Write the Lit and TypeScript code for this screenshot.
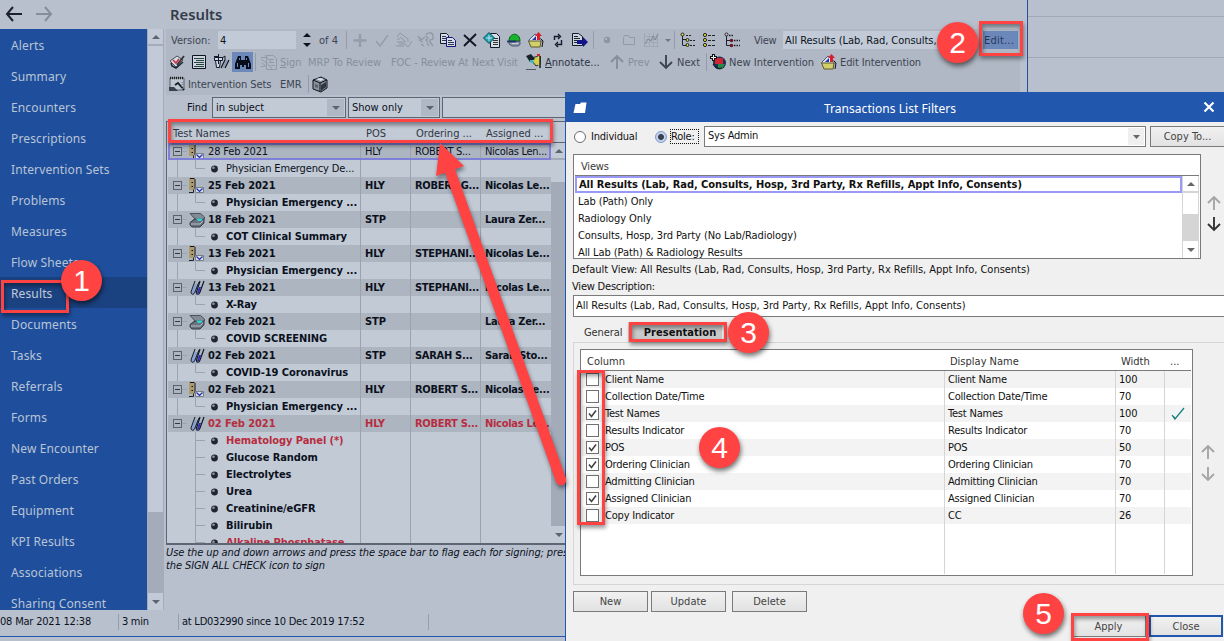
import {LitElement, css, html, svg} from 'lit';
import {customElement, property} from 'lit/decorators.js';
import {classMap} from 'lit/directives/class-map.js';

const ICONS: Record<string, unknown> = {
  plus: svg`<path d="M8 2v13M1.500 8.500h13" stroke="#959daa" stroke-width="2.500" fill="none"/>`,
  check: svg`<path d="M2 9l4 5L14 3" stroke="#959daa" stroke-width="1.500" fill="none"/>`,
  hand: svg`<path d="M1 5l3-4 8 6M4 5l5 4M1 7h3M1 10h9M3 12h6M0 14h8M9 12l3 3 4-6M12 7v3" stroke="#8f97a4" fill="none"/>`,
  hands: svg`<path d="M0 4l3 4 4-3M1 8l4 2M8 3c1-3 7-3 7 1v3l-3 1v3M8 4l2 2-2 2 2 2M9 11l2 3M3 12l3 2M12 10l3 4" stroke="#8f97a4" stroke-width="1.300" fill="none"/>`,
  copy: svg`<path d="M.5 1.500h6l2 2v8h-8z" fill="#d6dce6" stroke="#111b2c"/><path d="M6.500 5.500h6l3 3v6h-9z" fill="#d6dce6" stroke="#14147c"/><path d="M2 4.500h4M2 6.500h4M2 8.500h4M8 8.500h4M8 10.500h6M8 12.500h6" stroke="#2a3550"/>`,
  cross: svg`<path d="M2 3l12 11M14 2L2 14" stroke="#111722" stroke-width="1.900" fill="none"/>`,
  target: svg`<path d="M6.500 1.500h6l3 3v11h-9z" fill="#d6dce6" stroke="#111b2c"/><path d="M9 6.500h5M9 8.500h5M9 10.500h5M9 12.500h5" stroke="#333"/><path d="M5 .500l5.500 5.500L5 11.500-.500 6z" fill="#18a7b5" stroke="#0b4c55"/><path d="M5 3v6M2 6h6" stroke="#d6dce6"/>`,
  green: svg`<path d="M3 9c0-9 11-9 11 0z" fill="#18b32c" stroke="#0b5c1c"/><path d="M3 9.500h11v3l-2 1.500H6l-3-2z" fill="#8c97aa" stroke="#4c566c"/><path d="M1 9.500h9" stroke="#23306e" stroke-width="1.800"/><path d="M6 11.500h6" stroke="#c9d0dc"/>`,
  folder: svg`<path d="M1 8l6-6 6 5v3H1z" fill="#dce3ef" stroke="#4a5a8a"/><path d="M4 8l4-4v4z" fill="#2433a8"/><path d="M.500 9h12.500l-1 6H3z" fill="#d3cf6a" stroke="#5c5a2c"/><path d="M9 8V4H7l3.500-4L14 4h-2v4z" fill="#d81f2c"/><path d="M13 7l2 2-1 6" stroke="#111" fill="none"/>`,
  refresh: svg`<path d="M4.500 8V4.500H9M8 2l2.500 2.500L8 7M11.500 8v4.500H7M8 10l-2.500 2.500L8 15" stroke="#111a2a" stroke-width="1.400" fill="none"/>`,
  docArrow: svg`<path d="M.5 1.500h6l4 3v9h-10z" fill="#cdd4df" stroke="#111b2c"/><path d="M2 4.500h4M2 6.500h6M2 8.500h3M2 10.500h3" stroke="#222"/><path d="M5 8h6V5l5 5-5 5v-3H5z" fill="#15158a"/>`,
  dot: svg`<circle cx="8" cy="8" r="3.200" fill="#8c95a3"/><circle cx="7" cy="7" r="1" fill="#b7bfcb"/>`,
  greyFolder: svg`<path d="M2.500 12.500v-7l1-2h4l1 2h5v7z" stroke="#929aa7" fill="none"/>`,
  chart: svg`<path d="M1.500 1v13.500H16M3 4.500h12M3 7.500h12M3 10.500h12M6.500 1v13M10.500 1v13M14.500 1v13" stroke="#a0a8b5" fill="none"/><path d="M2 12l3-5 3 2 2-5 2 4 3-6" stroke="#7e8796" fill="none"/>`,
  tree: svg`<path d="M2.500 3v10.500M3 7.500h3M3 13.500h3" stroke="#1b2230" fill="none"/><path d="M6 3.500h5M10 8.500h6M10 13.500h6" stroke="#1b2230" stroke-dasharray="2 1"/><circle cx="2.500" cy="2.500" r="1.500" fill="#d9d63a" stroke="#222"/><circle cx="7.500" cy="8" r="1.500" fill="#d9d63a" stroke="#222"/><circle cx="7.500" cy="13" r="1.500" fill="#d9d63a" stroke="#222"/>`,
  tree2: svg`<path d="M6 3.500h7M6 8.500h7M6 13.500h7" stroke="#1b2230" stroke-dasharray="3 1"/><circle cx="3" cy="3" r="1.600" fill="#d9d63a" stroke="#222"/><circle cx="3" cy="8" r="1.600" fill="#d9d63a" stroke="#222"/><circle cx="3" cy="13" r="1.600" fill="#d9d63a" stroke="#222"/>`,
  tree3: svg`<path d="M2.500 4v9.500M2.500 8.500h4M2.500 13.500h4" stroke="#1b2230" fill="none"/><path d="M10 8.500h6M10 13.500h6M5 3.500h5" stroke="#1b2230" stroke-width="1.600" stroke-dasharray="1.500 1"/><circle cx="2.500" cy="2.500" r="1.500" fill="#ccd" stroke="#222"/><circle cx="7.500" cy="8.500" r="1.800" fill="#6b1820"/><circle cx="7.500" cy="13.500" r="1.800" fill="#6b1820"/>`,
  signBook: svg`<path d="M1 7l7-5 6 4-7 7z" fill="#d3d9e3" stroke="#4a525e"/><path d="M2 9l1 3 4 2 7-6" fill="none" stroke="#1c2431" stroke-width="1.500"/><path d="M4 6l3 3 3-4" stroke="#d02c3a" stroke-width="1.600" fill="none"/><path d="M8 11l7-9" stroke="#333" stroke-width="1.800"/>`,
  lines: svg`<path d="M1.500 1.500h13v13h-13z" fill="#cdd4df" stroke="#0d1420"/><path d="M3 4.500h10M5 6.500h8M3 8.500h10M5 10.500h8M3 12.500h10" stroke="#23453b"/>`,
  caps: svg`<path d="M1.500 3.500h8v3h-8zM2.500 6.500l1 7h3l1-7" fill="#d3d9e3" stroke="#111a2a"/><path d="M5.500 0v10M1 2.500h5" stroke="#111a2a"/><path d="M8 14l4-8M12 14l4-8" stroke="#111a2a" stroke-width="1.300"/><path d="M10 14l4-8" stroke="#8b98ab" stroke-width="1.500"/><path d="M9 4l3-2v4" stroke="#111a2a" fill="none"/>`,
  binoculars: svg`<path d="M3 2h3v4h4V2h3l3 8v5h-5v-4H9v2H7v-2H5v4H0v-5z" fill="#080d1a"/><path d="M2.500 9v4M4.500 4v2M11.500 4v2M13.500 9v4" stroke="#6a86bd"/>`,
  signDoc: svg`<path d="M5.500 1.500h7l3 3v11h-10zM0 5l8 6 3 4M1 9l5 4M4 1l7 8M8 5.500h5M8 8.500h5M10 11.500h4M0 3.500h5M0 12.500h4" stroke="#929ba8" fill="none"/>`,
  annotate: svg`<path d="M4 4l6 8 4-2V2z" fill="#d4cf54" stroke="#222a38"/><path d="M0 2l5-2 4 5-5 3z" fill="#16222e"/><path d="M4 6h3l1 4-4-2z" fill="#32b8c4"/><path d="M14 2v12" stroke="#161a20" stroke-width="1.500"/><path d="M12.500 0v11" stroke="#ddd03c" stroke-width="1.500"/><path d="M11 1h3" stroke="#c82a30" stroke-width="2"/><path d="M0 15.500h10" stroke="#556"/>`,
  up: svg`<path d="M8 15V2M2 8l6-6 6 6" stroke="currentColor" stroke-width="1.900" fill="none"/>`,
  down: svg`<path d="M8 1v13M2 8l6 6 6-6" stroke="currentColor" stroke-width="1.900" fill="none"/>`,
  newInt: svg`<circle cx="9.500" cy="9" r="6.500" fill="#1c3152"/><path d="M5 4h8v6H5z" fill="#cf2431"/><path d="M8 10h7l-3 5H8z" fill="#238a4b"/><path d="M3.500 0v7M0 3.500h7" stroke="#111" stroke-width="3"/><path d="M3.500 1v5M1 3.500h5" stroke="#eee"/><path d="M3 10c2 4 5 5 9 4" stroke="#111" fill="none"/>`,
  setBook: svg`<path d="M1 2h14v12H1z" fill="#bfc7d2" stroke="#59616c"/><path d="M1 2h14" stroke="#222" stroke-width="2.500" stroke-dasharray="1 1"/><path d="M0 11h5l4 4H0z" fill="#38414a"/><path d="M6 9l3-2 6 7" stroke="#161c26" stroke-width="1.800" fill="none"/><path d="M13.500 6v8" stroke="#7c8792" stroke-width="2" stroke-dasharray="1 1"/>`,
  cube: svg`<path d="M1 4l8-3 6 3v8l-6 4-8-3z" fill="#8a929c" stroke="#10151c"/><path d="M1 4l7 3 7-3M8 7v8" stroke="#10151c" fill="none"/><path d="M4 3l5 2 3-2-4-1z" fill="#dce2ea"/><path d="M9 9l5-3v5l-5 4z" fill="#30363e"/><path d="M3 8l3 1v3l-3-1z" fill="#59616b"/>`,
  door: svg`<path d="M0 0h5.500v12H0z" fill="#ab9b6e"/><path d="M6 1v10M1 .5h4.500" stroke="#151515"/><path d="M0 14.500h4.500v-3" stroke="#222" fill="none"/><path d="M2.500 4.500H4M2.500 8.500H4" stroke="#111"/><path d="M6.500 9.500h8v5h-8z" fill="#d9dfe8" stroke="#777f8c"/><path d="M7.500 10.500l3 3 3-3" stroke="#1e2cae" stroke-width="1.200" fill="none"/>`,
  scanner: svg`<path d="M1 1.500h10.500l4 3.500v2L10 10H2l4-3z" fill="#828b97" stroke="#3a4048" stroke-width=".8"/><path d="M1 10.500L6 7h9v4l-4 4H3l-2-2z" fill="#69727e" stroke="#252b33" stroke-width=".8"/><path d="M2 12h9l3-3" stroke="#b4bcc6" fill="none"/><path d="M7 6.500h7l-2 2.500H9z" fill="#35d2d4"/>`,
  tubes: svg`<path d="M6 4h3L6 13c-1 2-4 2-3.500-1z" fill="#86a3cf"/><path d="M6 1L2 12c0 3 3 3 4 0L10 2" stroke="#121a28" fill="none"/><path d="M11 1L7.500 12c0 3 2.500 3 3.500 0l4-11" stroke="#121a28" stroke-width="1.200" fill="none"/><path d="M10 7l-2 6h2l2-6z" fill="#3626b0"/>`,
  bullet: svg`<circle cx="8.500" cy="8" r="3.400" fill="#20252e"/><circle cx="7.500" cy="6.800" r="1.300" fill="#8e97a6"/>`,
  left: svg`<path d="M16 8H1M7 1L1 8l6 7" stroke="currentColor" stroke-width="2" fill="none"/>`,
  right: svg`<path d="M0 8h15M9 1l6 7-6 7" stroke="currentColor" stroke-width="2" fill="none"/>`,
  close: svg`<path d="M3.500 3.500l9 9M12.500 3.500l-9 9" stroke="#fff" stroke-width="2.200" fill="none"/>`,
  window: svg`<path d="M2.500 5H7l1-1.500h5.500L12 14H.500z" fill="#fff"/>`,
};

const icon = (name: string, size = 16) => html`
  <svg class="icon" width=${size} height=${size} viewBox="0 0 16 16">${ICONS[name]}</svg>`;

const ICON_CSS = css`
  * { box-sizing: border-box; }
  .icon { display: block; flex: none; overflow: visible; }
`;

const NAV = [
  'Alerts', 'Summary', 'Encounters', 'Prescriptions', 'Intervention Sets', 'Problems', 'Measures',
  'Flow Sheets', 'Results', 'Documents', 'Tasks', 'Referrals', 'Forms', 'New Encounter',
  'Past Orders', 'Equipment', 'KPI Results', 'Associations', 'Sharing Consent',
];

interface ResultGroup {
  icon: string;
  date: string;
  pos: string;
  ordering: string;
  assigned: string;
  tests: string[];
  read?: boolean;
  abnormal?: boolean;
}

const RESULTS: ResultGroup[] = [
  {icon: 'door', date: '28 Feb 2021', pos: 'HLY', ordering: 'ROBERT S...', assigned: 'Nicolas Len...', tests: ['Physician Emergency De...'], read: true},
  {icon: 'door', date: '25 Feb 2021', pos: 'HLY', ordering: 'ROBERT G...', assigned: 'Nicolas Le...', tests: ['Physician Emergency ...']},
  {icon: 'scanner', date: '18 Feb 2021', pos: 'STP', ordering: '', assigned: 'Laura Zer...', tests: ['COT Clinical Summary']},
  {icon: 'door', date: '13 Feb 2021', pos: 'HLY', ordering: 'STEPHANI...', assigned: 'Nicolas Le...', tests: ['Physician Emergency ...']},
  {icon: 'tubes', date: '13 Feb 2021', pos: 'HLY', ordering: 'STEPHANI...', assigned: 'Nicolas Le...', tests: ['X-Ray']},
  {icon: 'scanner', date: '02 Feb 2021', pos: 'STP', ordering: '', assigned: 'Laura Zer...', tests: ['COVID SCREENING']},
  {icon: 'tubes', date: '02 Feb 2021', pos: 'STP', ordering: 'SARAH S...', assigned: 'Sarah Sto...', tests: ['COVID-19 Coronavirus']},
  {icon: 'door', date: '02 Feb 2021', pos: 'HLY', ordering: 'ROBERT S...', assigned: 'Nicolas Le...', tests: ['Physician Emergency ...']},
  {icon: 'tubes', date: '02 Feb 2021', pos: 'HLY', ordering: 'ROBERT S...', assigned: 'Nicolas Le...', abnormal: true,
    tests: ['Hematology Panel (*)', 'Glucose Random', 'Electrolytes', 'Urea', 'Creatinine/eGFR', 'Bilirubin', 'Alkaline Phosphatase']},
];

const ABNORMAL_TESTS = ['Hematology Panel (*)', 'Alkaline Phosphatase'];

const VIEWS = ['Lab (Path) Only', 'Radiology Only', 'Consults, Hosp, 3rd Party (No Lab/Radiology)', 'All Lab (Path) & Radiology Results'];
const DEFAULT_VIEW = 'All Results (Lab, Rad, Consults, Hosp, 3rd Party, Rx Refills, Appt Info, Consents)';

const COLUMNS = [
  {name: 'Client Name', display: 'Client Name', width: 100, on: false},
  {name: 'Collection Date/Time', display: 'Collection Date/Time', width: 70, on: false},
  {name: 'Test Names', display: 'Test Names', width: 100, on: true, tree: true},
  {name: 'Results Indicator', display: 'Results Indicator', width: 70, on: false},
  {name: 'POS', display: 'POS', width: 50, on: true},
  {name: 'Ordering Clinician', display: 'Ordering Clinician', width: 70, on: true},
  {name: 'Admitting Clinician', display: 'Admitting Clinician', width: 70, on: false},
  {name: 'Assigned Clinician', display: 'Assigned Clinician', width: 70, on: true},
  {name: 'Copy Indicator', display: 'CC', width: 26, on: false},
];

@customElement('side-nav')
export class SideNav extends LitElement {
  static styles = [ICON_CSS, css`
    :host { display: flex; width: 164px; height: 581px; flex: none; }
    .list { width: 147px; flex: none; background: #1f4f9c; overflow: hidden; }
    .item {
      height: 31px;
      padding: 1px 0 0 11px;
      font: 12px/31px 'Noto Sans', sans-serif;
      letter-spacing: 0.13px;
      color: #b9c4d6;
      white-space: nowrap;
    }
    .item.on { background: #1b4280; color: #c3cbd9; }
    .bar { width: 17px; display: flex; flex-direction: column; background: #c3cad7; border-right: 1px solid #a4acb9; border-left: 1px solid #a4acb9; }
    .btn { height: 17px; display: flex; align-items: center; justify-content: center; }
    .btn.top { border-bottom: 2px solid #a4acb9; }
    .btn.bottom { background: #c3cad7; }
    .space { height: 466px; }
    .track { flex: 1; background: #a4acb9; }
  `];

  render() {
    return html`
      <div class="list">
        ${NAV.map((n) => html`<div class=${classMap({item: true, on: n === 'Results'})}>${n}</div>`)}
      </div>
      <div class="bar">
        <div class="btn top"><svg class="icon" width="8" height="4"><path d="M0 4l4-4 4 4z" fill="#5c6470"/></svg></div>
        <div class="space"></div>
        <div class="track"></div>
        <div class="btn bottom"><svg class="icon" width="8" height="4"><path d="M0 0h8L4 4z" fill="#5c6470"/></svg></div>
      </div>
    `;
  }
}

@customElement('results-toolbar')
export class ResultsToolbar extends LitElement {
  static styles = [ICON_CSS, css`
    :host {
      display: block;
      width: 854px;
      height: 66px;
      background: #b0b8c5;
      font: 11px/14px 'DejaVu Sans Condensed', sans-serif;
      color: #3c4552;
    }
    .row { display: flex; align-items: center; height: 22px; white-space: nowrap; }
    .cell { width: 22px; height: 22px; display: flex; align-items: center; justify-content: center; flex: none; }
    .cell.active { height: 20px; width: 21px; background: #6c87b9; }
    .sep { width: 1px; height: 18px; background: #949ca9; flex: none; }
    .pad { width: 2px; flex: none; }
    .t { flex: none; padding-top: 1px; }
    .t.dim, .dim { color: #868f9c; }
    .version { width: 52px; padding-left: 5px; }
    .box { background: #c2cad7; height: 18px; line-height: 19px; padding-left: 2px; color: #0c1420; flex: none; overflow: hidden; }
    .box.ver { width: 78px; }
    .box.view { width: 190px; letter-spacing: -0.05px; }
    .spin { width: 21px; display: flex; justify-content: center; flex: none; }
    .of { width: 29px; padding-left: 2px; }
    .caret { width: 12px; flex: none; display: flex; justify-content: center; }
    .edit { width: 35px; height: 18px; margin-left: 10px; background: #6c87b9; line-height: 17px; padding-left: 1px; color: #28395a; letter-spacing: 0.2px; }
    .view-label { width: 38px; padding-left: 9px; letter-spacing: -0.3px; }
    .dark { color: #2b333f; }
    .sign { width: 28px; margin-left: -2px; }
    .mrp { width: 83px; }
    .foc { width: 132px; letter-spacing: -0.1px; }
    .anno { width: 61px; }
    .prev { width: 27px; }
    .next { width: 29px; }
    .newi { width: 89px; }
    .edi { letter-spacing: -0.1px; }
    .sets { width: 92px; letter-spacing: -0.1px; }
    .emr { width: 28px; }
  `];

  render() {
    const cells = (names: string[]) => names.map((n) => html`<span class="cell">${icon(n)}</span>`);
    return html`
      <div class="row">
        <span class="t version">Version:</span>
        <span class="box ver">4</span>
        <span class="spin"><svg class="icon" width="8" height="14"><path d="M0 4l4-4 4 4zM0 10h8l-4 4z" fill="#0b1220"/></svg></span>
        <span class="t of">of 4</span>
        <span class="sep"></span><span class="pad"></span>
        ${cells(['plus', 'check', 'hand', 'hands', 'copy', 'cross', 'target', 'green', 'folder', 'refresh', 'docArrow'])}
        <span class="pad"></span><span class="sep"></span><span class="pad"></span>
        ${cells(['dot', 'greyFolder', 'chart'])}
        <span class="caret"><svg class="icon" width="6" height="3"><path d="M0 0h6L3 3z" fill="#6e7784"/></svg></span>
        <span class="sep"></span><span class="pad"></span>
        ${cells(['tree', 'tree2', 'tree3'])}
        <span class="pad"></span>
        <span class="t view-label">View</span>
        <span class="box view">All Results (Lab, Rad, Consults,</span>
        <span class="t edit">Edit...</span>
      </div>
      <div class="row">
        ${cells(['signBook', 'lines', 'caps'])}
        <span class="cell active">${icon('binoculars')}</span>
        <span class="pad"></span><span class="sep"></span><span class="pad"></span>
        <span class="cell">${icon('signDoc')}</span><span class="pad"></span>
        <span class="t dim sign"><u>S</u>ign</span>
        <span class="t dim mrp">MRP To Review</span>
        <span class="t dim foc">FOC - Review At Next Visit</span>
        <span class="cell">${icon('annotate')}</span>
        <span class="t dark anno"><u>A</u>nnotate...</span>
        <span class="cell dim">${icon('up')}</span>
        <span class="t dim prev">Prev</span>
        <span class="cell">${icon('down')}</span>
        <span class="t next">Next</span>
        <span class="sep"></span>
        <span class="cell">${icon('newInt')}</span>
        <span class="t newi">New Intervention</span>
        <span class="cell">${icon('folder')}</span>
        <span class="t edi">Edit Intervention</span>
      </div>
      <div class="row">
        <span class="cell">${icon('setBook')}</span>
        <span class="t sets">Intervention Sets</span>
        <span class="t emr">EMR</span>
        <span class="sep"></span>
        <span class="cell">${icon('cube')}</span>
      </div>
    `;
  }
}

@customElement('results-list')
export class ResultsList extends LitElement {
  static styles = [ICON_CSS, css`
    :host {
      display: block;
      width: 402px;
      height: 424px;
      border: 1px solid #5d6672;
      border-width: 1px 0 2px 1px;
      padding-left: 1px;
      background: #c2cad6;
      font: 11px/17px 'DejaVu Sans Condensed', sans-serif;
      color: #0b111c;
    }
    .row, .head { display: grid; grid-template-columns: 193px 50px 70px 70px; width: 383px; white-space: nowrap; }
    .head { height: 21px; line-height: 23px; color: #2f3743; border-bottom: 1px solid #5d6672; width: 399px; }
    .head span { padding-left: 5px; }
    .body { display: flex; height: 400px; }
    .rows { width: 383px; height: 400px; overflow: hidden; flex: none; }
    .row { height: 17px; font-weight: bold; letter-spacing: -0.08px; }
    .row > span { border-right: 1px solid #9ba3b0; padding-left: 4px; overflow: hidden; }
    .row > span:nth-child(n + 3) { letter-spacing: -0.28px; }
    .row > span:last-child { border-right: 0; }
    .row.group { background: #adb5c1; }
    .row.read { font-weight: normal; letter-spacing: -0.14px; }
    .row.current { outline: 2px solid #7e80d8; outline-offset: -2px; }
    .row.bad { color: #b82c40; }
    .row > .name { display: flex; align-items: center; padding-left: 5px; overflow: hidden; }
    .toggle { width: 9px; height: 9px; border: 1px solid #5a626e; display: flex; align-items: center; justify-content: center; flex: none; }
    .toggle::after { content: ''; width: 5px; height: 1px; background: #303844; }
    .dash { width: 5px; height: 1px; background: #9ba3b0; margin-right: 2px; }
    .group .icon { margin-right: 3px; }
    .row > .leaf { padding-left: 9px; }
    .rail { width: 1px; height: 17px; background: #9ba3b0; margin-right: 17px; flex: none; }
    .rail.off { background: transparent; }
    .elbow { width: 10px; height: 17px; flex: none; }
    .leaf .icon { margin: 0 4px 0 1px; }
    .bar { width: 16px; background: #a3abb8; display: flex; flex-direction: column; }
    .btn { height: 17px; display: flex; align-items: center; justify-content: center; background: #c2cad6; }
    .top { border-bottom: 2px solid #a3abb8; }
    .thumb { height: 22px; background: #c2cad6; }
    .gap { flex: 1; }
  `];

  private leaf(g: ResultGroup, t: string, last: boolean) {
    return html`
      <div class=${classMap({row: true, read: !!g.read, bad: ABNORMAL_TESTS.includes(t)})}>
        <span class="name leaf">
          <i class=${classMap({rail: true, off: !!g.abnormal})}></i>
          <svg class="elbow"><path d=${last ? 'M.5 0v8.5H10' : 'M.5 0v17M.5 8.500H10'} stroke="#9ba3b0" fill="none"/></svg>
          ${icon('bullet')}${t}
        </span>
        <span></span><span></span><span></span>
      </div>`;
  }

  render() {
    return html`
      <div class="head"><span>Test Names</span><span>POS</span><span>Ordering ...</span><span>Assigned ...</span></div>
      <div class="body">
        <div class="rows">
          ${RESULTS.map((g, i) => html`
            <div class=${classMap({row: true, group: true, read: !!g.read, current: i === 0, bad: !!g.abnormal})}>
              <span class="name"><i class="toggle"></i><i class="dash"></i>${icon(g.icon)}${g.date}</span>
              <span>${g.pos}</span><span>${g.ordering}</span><span>${g.assigned}</span>
            </div>
            ${g.tests.map((t, j) => this.leaf(g, t, j === g.tests.length - 1 && !g.abnormal))}
          `)}
        </div>
        <div class="bar">
          <div class="btn top"><svg class="icon" width="8" height="4"><path d="M0 4l4-4 4 4z" fill="#5c6470"/></svg></div>
          <div class="thumb"></div>
          <div class="gap"></div>
          <div class="btn"><svg class="icon" width="8" height="4"><path d="M0 0h8L4 4z" fill="#5c6470"/></svg></div>
        </div>
      </div>
    `;
  }
}

@customElement('filters-dialog')
export class FiltersDialog extends LitElement {
  static styles = [ICON_CSS, css`
    :host {
      display: block;
      width: 659px;
      height: 549px;
      background: #f0f0f0;
      border-left: 1px solid #2257ae;
      overflow: hidden;
      font: 11px/17px 'DejaVu Sans Condensed', sans-serif;
      letter-spacing: -0.2px;
      color: #111;
      white-space: nowrap;
    }
    .title { height: 30px; background: #2257ae; display: flex; align-items: center; padding: 0 7px; color: #fff; font: 12px/30px 'Noto Sans', sans-serif; letter-spacing: 0.05px; }
    .title span { flex: 1; text-align: center; padding: 3px 10px 0 0; }
    .who { display: flex; align-items: center; height: 31px; padding: 0 0 2px 8px; }
    .radio { width: 12px; height: 12px; border: 1px solid #6c6c6c; border-radius: 50%; background: #fff; margin-right: 5px; flex: none; }
    .radio.on { border-color: #8199c4; background: radial-gradient(circle, #3a404c 0 2.500px, #c2d2ee 3.500px); margin-right: 3px; }
    .who .ind { width: 64px; flex: none; }
    .role { border: 1px dotted #111; width: 29px; height: 15px; line-height: 13px; margin-right: 5px; flex: none; }
    .combo { width: 442px; height: 21px; border: 1px solid #7a7a7a; background: #fff; display: flex; align-items: center; padding: 0 1px 0 3px; margin-right: 4px; flex: none; }
    .combo span { flex: 1; line-height: 17px; padding-bottom: 2px; }
    .combo i { width: 16px; height: 17px; background: #efefef; display: flex; align-items: center; justify-content: center; }
    .push { width: 75px; height: 21px; border: 1px solid #7b7b7b; background: linear-gradient(#f1f1f1, #e2e2e2); text-align: center; line-height: 20px; color: #444; flex: none; letter-spacing: 0; }
    .viewrow { display: flex; padding: 1px 0 0 7px; }
    .views { width: 628px; height: 105px; border: 1px solid #7a7a7a; background: #fff; padding: 0 1px; overflow: hidden; }
    .vh { height: 21px; line-height: 24px; padding-left: 6px; border-bottom: 1px solid #7a7a7a; color: #3a3a3a; }
    .vbody { display: flex; height: 82px; }
    .vlist { flex: 1; overflow: hidden; }
    .vlist div { height: 17px; padding-left: 3px; line-height: 17px; letter-spacing: -0.08px; }
    .vlist .sel { border: 2px solid #9a99f6; font-weight: bold; line-height: 14px; padding-left: 2px; letter-spacing: -0.04px; }
    .bar { width: 17px; border-left: 1px solid #d5d5d5; border-right: 1px solid #d5d5d5; display: flex; flex-direction: column; background: #d5d5d5; }
    .bar .b { height: 17px; background: #fff; display: flex; align-items: center; justify-content: center; }
    .bar .b.top { border-bottom: 2px solid #d5d5d5; }
    .bar .th { height: 21px; background: #fff; }
    .bar .gp { flex: 1; }
    .arrows { display: flex; flex-direction: column; gap: 5px; color: #a5a5a5; }
    .viewrow .arrows { margin: 41px 0 0 5px; }
    .dark { color: #333; }
    .desc { padding: 2px 0 0 6px; letter-spacing: -0.02px; }
    .desc.lbl { padding-top: 0; letter-spacing: -0.2px; }
    .input { margin: 0 0 0 7px; height: 22px; border: 1px solid #7a7a7a; background: #fff; line-height: 20px; padding-left: 2px; width: 660px; letter-spacing: -0.02px; }
    .tabs { display: flex; height: 25px; padding-left: 18px; }
    .tabs span { line-height: 31px; width: 41px; letter-spacing: -0.1px; color: #333; }
    .tabs .on { width: 94px; margin: 5px 0 0 3px; height: 20px; line-height: 21px; background: #c9c9c9; color: #111; text-align: center; font-weight: bold; letter-spacing: 0.05px; padding-left: 10px; }
    .panel { margin-left: 7px; height: 243px; border: 1px solid #d5d5d5; border-right: 0; display: flex; padding: 6px 0 0 6px; }
    .grid { width: 613px; height: 227px; border: 1px solid #7a7a7a; background: #fff; padding: 0 1px; flex: none; display: flex; flex-direction: column; }
    .gr { display: grid; grid-template-columns: 363px 171px 49px 26px; height: 17px; flex: none; }
    .gr > span { border-right: 1px solid #d5d5d5; padding-left: 3px; display: flex; align-items: center; }
    .gr > span:last-child { border: 0; }
    .gr:nth-child(even) { background: #f3f3f3; }
    .gr.gh { height: 21px; background: #fff; border-bottom: 1px solid #7a7a7a; color: #333; letter-spacing: 0; }
    .gr.gh > span { border: 0; padding: 2px 0 0 5px; }
    .gr.rest { flex: 1; height: auto; background: #fff; margin-bottom: 1px; }
    .cb { width: 13px; height: 13px; border: 1px solid #707070; background: #fff; margin: 0 6px 0 1px; flex: none; }
    .panel .arrows { margin: 95px 0 0 7px; gap: 6px; }
    .foot { display: flex; padding: 6px 0 0 7px; }
    .foot .push { margin-right: 3px; }
    .foot .push:nth-child(2) { margin-right: 6px; }
    .last { display: flex; justify-content: flex-end; gap: 3px; padding: 3px 1px 0 0; }
    .last .push { height: 22px; line-height: 21px; }
    .last .close { border: 2px solid #2257ae; line-height: 19px; width: 74px; }
  `];

  render() {
    return html`
      <div class="title">${icon('window')}<span>Transactions List Filters</span>${icon('close')}</div>
      <div class="who">
        <i class="radio"></i><span class="ind">Individual</span>
        <i class="radio on"></i><span class="role">Role:</span>
        <div class="combo"><span>Sys Admin</span><i><svg class="icon" width="7" height="4"><path d="M0 0h7L3.500 4z" fill="#666"/></svg></i></div>
        <div class="push">Copy To...</div>
      </div>
      <div class="viewrow">
        <div class="views">
          <div class="vh">Views</div>
          <div class="vbody">
            <div class="vlist"><div class="sel">${DEFAULT_VIEW}</div>${VIEWS.map((v) => html`<div>${v}</div>`)}</div>
            <div class="bar">
              <div class="b top"><svg class="icon" width="8" height="4"><path d="M0 4l4-4 4 4z" fill="#666"/></svg></div>
              <div class="th"></div><div class="gp"></div>
              <div class="b"><svg class="icon" width="8" height="4"><path d="M0 0h8L4 4z" fill="#666"/></svg></div>
            </div>
          </div>
        </div>
        <div class="arrows">${icon('up')}<span class="dark">${icon('down')}</span></div>
      </div>
      <div class="desc">Default View: ${DEFAULT_VIEW}</div>
      <div class="desc lbl">View Description:</div>
      <div class="input">${DEFAULT_VIEW}</div>
      <div class="tabs"><span>General</span><span class="on">Presentation</span></div>
      <div class="panel">
        <div class="grid">
          <div class="gr gh"><span>Column</span><span>Display Name</span><span>Width</span><span>...</span></div>
          ${COLUMNS.map((c) => html`
            <div class="gr">
              <span><i class="cb">${c.on ? html`<svg class="icon" width="11" height="11"><path d="M2 5.500l2.500 3L9 2.500" stroke="#444" stroke-width="1.600" fill="none"/></svg>` : ''}</i>${c.name}</span>
              <span>${c.display}</span><span>${c.width}</span>
              <span>${c.tree ? html`<svg class="icon" width="18" height="14"><path d="M4 8l3 4 9-11" stroke="#0e8080" stroke-width="1.200" fill="none"/><path d="M4 8l3 2v3z" fill="#0e8080"/></svg>` : ''}</span>
            </div>`)}
          <div class="gr rest"><span></span><span></span><span></span><span></span></div>
        </div>
        <div class="arrows">${icon('up')}${icon('down')}</div>
      </div>
      <div class="foot"><div class="push">New</div><div class="push">Update</div><div class="push">Delete</div></div>
      <div class="last"><div class="push">Apply</div><div class="push close">Close</div></div>
    `;
  }
}

@customElement('step-badge')
export class StepBadge extends LitElement {
  @property({type: Number}) step = 1;

  static styles = css`
    :host {
      position: absolute;
      width: 41px;
      height: 41px;
      border-radius: 50%;
      background: #ff4343;
      color: #fff;
      font: 30px/41px 'Liberation Sans', sans-serif;
      text-align: center;
      box-shadow: 1px 3px 5px rgba(0, 0, 0, 0.55);
    }
  `;

  render() {
    return html`${this.step}`;
  }
}

@customElement('app-root')
export class AppRoot extends LitElement {
  static styles = [ICON_CSS, css`
    :host {
      display: block;
      position: relative;
      width: 1224px;
      height: 641px;
      overflow: hidden;
      background: #b8c0ce;
      font: 11px/13px 'DejaVu Sans Condensed', sans-serif;
      color: #0b111c;
    }
    .window { display: flex; height: 637px; border-bottom: 1px solid #2257ae; }
    .left { width: 1027px; }
    .right { flex: 1; border-left: 1px solid #27509a; background: #b8c0ce; }
    .right div { border-bottom: 1px solid #a1a9b6; height: 17px; }
    .right div + div { height: 41px; }
    .top { height: 29px; display: flex; align-items: center; padding: 0 0 1px 6px; color: #1c222c; }
    .top .fwd { margin: 0 0 0 14px; color: #858d9a; }
    .top h1 { margin: 0 0 0 118px; font: 600 14.8px/28px 'Noto Sans', sans-serif; color: #343c49; }
    .mid { display: flex; height: 581px; }
    .main { margin-left: 2px; width: 861px; }
    .find { display: flex; align-items: center; height: 25px; margin-bottom: 1px; padding-left: 21px; white-space: nowrap; }
    .find .lbl { width: 25px; }
    .sel { height: 21px; border: 1px solid #5d6672; background: #c2cad6; display: flex; align-items: center; justify-content: space-between; padding: 0 1px 0 3px; margin-right: 2px; }
    .sel i { width: 17px; height: 17px; background: #b0b8c5; display: flex; align-items: center; justify-content: center; }
    .subject { width: 134px; }
    .only { width: 92px; }
    .query { width: 140px; }
    .hint { font-style: italic; margin: 1px 0 0; width: 420px; letter-spacing: -0.1px; }
    .status { display: flex; align-items: center; height: 26px; padding-bottom: 3px; white-space: nowrap; }
    .status span { height: 16px; line-height: 16px; padding-left: 3px; border-right: 1px solid #969eab; }
    .status .clock { width: 119px; padding-left: 0; letter-spacing: -0.2px; }
    .status .min { width: 60px; letter-spacing: -0.3px; }
    .status .at { width: 250px; letter-spacing: -0.24px; }
    filters-dialog { position: absolute; left: 565px; top: 92px; }
    .mark { position: absolute; border: 3px solid #ff4343; box-shadow: 1px 3px 4px rgba(0, 0, 0, 0.4), inset 1px 3px 4px rgba(0, 0, 0, 0.4); }
    .m1 { left: 1px; top: 280px; width: 68px; height: 33px; }
    .m2 { left: 979px; top: 21px; width: 44px; height: 35px; }
    .m3 { left: 629px; top: 322px; width: 98px; height: 20px; }
    .m4 { left: 577px; top: 370px; width: 28px; height: 155px; }
    .m5 { left: 1071px; top: 613px; width: 78px; height: 28px; }
    .m6 { left: 168px; top: 119px; width: 385px; height: 24px; }
    .pointer { position: absolute; left: 0; top: 0; filter: drop-shadow(1px 3px 2px rgba(0, 0, 0, 0.45)); }
    .s1 { left: 61px; top: 260px; }
    .s2 { left: 937px; top: 22px; }
    .s3 { left: 728px; top: 312px; }
    .s4 { left: 699px; top: 427px; }
    .s5 { left: 1023px; top: 593px; }
  `];

  render() {
    const caret = html`<i><svg class="icon" width="8" height="4"><path d="M0 0h8L4 4z" fill="#5c6470"/></svg></i>`;
    return html`
      <div class="window">
        <div class="left">
          <div class="top">${icon('left')}<span class="fwd">${icon('right')}</span><h1>Results</h1></div>
          <div class="mid">
            <side-nav></side-nav>
            <div class="main">
              <results-toolbar></results-toolbar>
              <div class="find">
                <span class="lbl">Find</span>
                <div class="sel subject">in subject${caret}</div>
                <div class="sel only">Show only${caret}</div>
                <div class="sel query"></div>
              </div>
              <results-list></results-list>
              <p class="hint">Use the up and down arrows and press the space bar to flag each for signing; press the SIGN ALL CHECK icon to sign</p>
            </div>
          </div>
          <div class="status">
            <span class="clock">08 Mar 2021 12:38</span><span class="min">3 min</span><span class="at">at LD032990 since 10 Dec 2019 17:52</span>
          </div>
        </div>
        <div class="right"><div></div><div></div></div>
      </div>
      <filters-dialog></filters-dialog>
      <div class="mark m1"></div>
      <div class="mark m2"></div>
      <div class="mark m3"></div>
      <div class="mark m4"></div>
      <div class="mark m5"></div>
      <div class="mark m6"></div>
      <svg class="pointer" width="600" height="520">
        <path d="M450 171L561 480" stroke="#ff4343" stroke-width="10.500" stroke-linecap="round"/>
        <path d="M440 143l24 23-28 10z" fill="#ff4343"/>
      </svg>
      ${[1, 2, 3, 4, 5].map((n) => html`<step-badge class="s${n}" .step=${n}></step-badge>`)}
    `;
  }
}
